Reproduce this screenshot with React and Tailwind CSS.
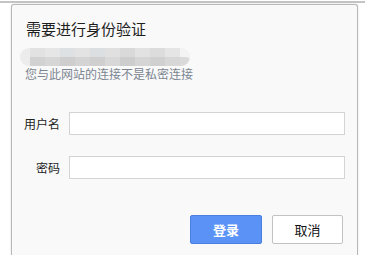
const mosaicTop = ["#e2e2e2", "#e6e6e6", "#dde1e4", "#e3e3e3", "#dbdfe2", "#e0e0e0", "#d9d9d9", "#e2e2e2", "#dcdcdc", "#e5e5e5"];
const mosaicBottom = ["#d2d2d2", "#d6d6d6", "#cecece", "#d4d4d4", "#cfcfcf", "#d8d8d8", "#cdcdcd", "#d5d5d5", "#d0d0d0", "#d7d7d7"];

const BlurredUrl = () => (
    <div className="ml-[8px] flex h-[18px] w-[170px] overflow-hidden rounded-full bg-[#ececec]">
        <div className="w-[10px]" />
        <div className="flex flex-col">
            <div className="flex h-[9px]">
                {mosaicTop.map((c, i) => (
                    <div key={i} className="h-full w-[15px]" style={{ backgroundColor: c }} />
                ))}
            </div>
            <div className="flex h-[9px]">
                {mosaicBottom.map((c, i) => (
                    <div key={i} className="h-full w-[15px]" style={{ backgroundColor: c }} />
                ))}
            </div>
        </div>
        <div className="flex w-[10px] flex-col">
            <div className="h-[9px] bg-[#f3f3f3]" />
            <div className="h-[9px] rounded-r-full bg-[#dadada]" />
        </div>
    </div>
);

const Field = ({ label, type }) => (
    <div className="flex items-center">
        <label className="w-[48px] text-right text-[12px] leading-[16px] text-[#222]">{label}</label>
        <input
            type={type}
            className="ml-[9px] h-[23px] w-[276px] border border-[#d4d4d4] bg-white outline-none"
        />
    </div>
);

export default function App() {
    return (
        <div
            className="relative h-[255px] w-[365px] overflow-hidden bg-white"
            style={{ fontFamily: '"Noto Sans CJK SC", "Noto Sans", sans-serif' }}
        >
            <div className="mt-[1px] h-[2px] w-full bg-[#c4c4c4]" />
            <div className="ml-[11px] mt-[1px] h-[251px] w-[347px] rounded-t-[3px] border border-b-0 border-[#b8b8b8] bg-[#f9f9f9] shadow-[0_0_2px_rgba(0,0,0,0.15)]">
                <h1 className="pl-[14px] pt-[14px] text-[15px] leading-[20px] font-normal text-[#1e1e1e]">
                    需要进行身份验证
                </h1>

                <div className="mt-[9px]">
                    <BlurredUrl />
                </div>
                <p className="pl-[13px] text-[12px] leading-[16px] text-[#7b8591]">
                    您与此网站的连接不是私密连接
                </p>

                <div className="mt-[30px] flex flex-col gap-[21px]">
                    <Field label="用户名" type="text" />
                    <Field label="密码" type="password" />
                </div>

                <div className="mr-[14px] mt-[36px] flex justify-end gap-[10px]">
                    <button className="h-[29px] w-[72px] rounded-[2px] border border-[#4a7fe0] bg-[#5a93f5] text-[13px] font-bold text-white">
                        登录
                    </button>
                    <button className="h-[29px] w-[71px] rounded-[2px] border border-[#c2c2c2] bg-white text-[13px] text-[#111]">
                        取消
                    </button>
                </div>
            </div>
        </div>
    );
}
